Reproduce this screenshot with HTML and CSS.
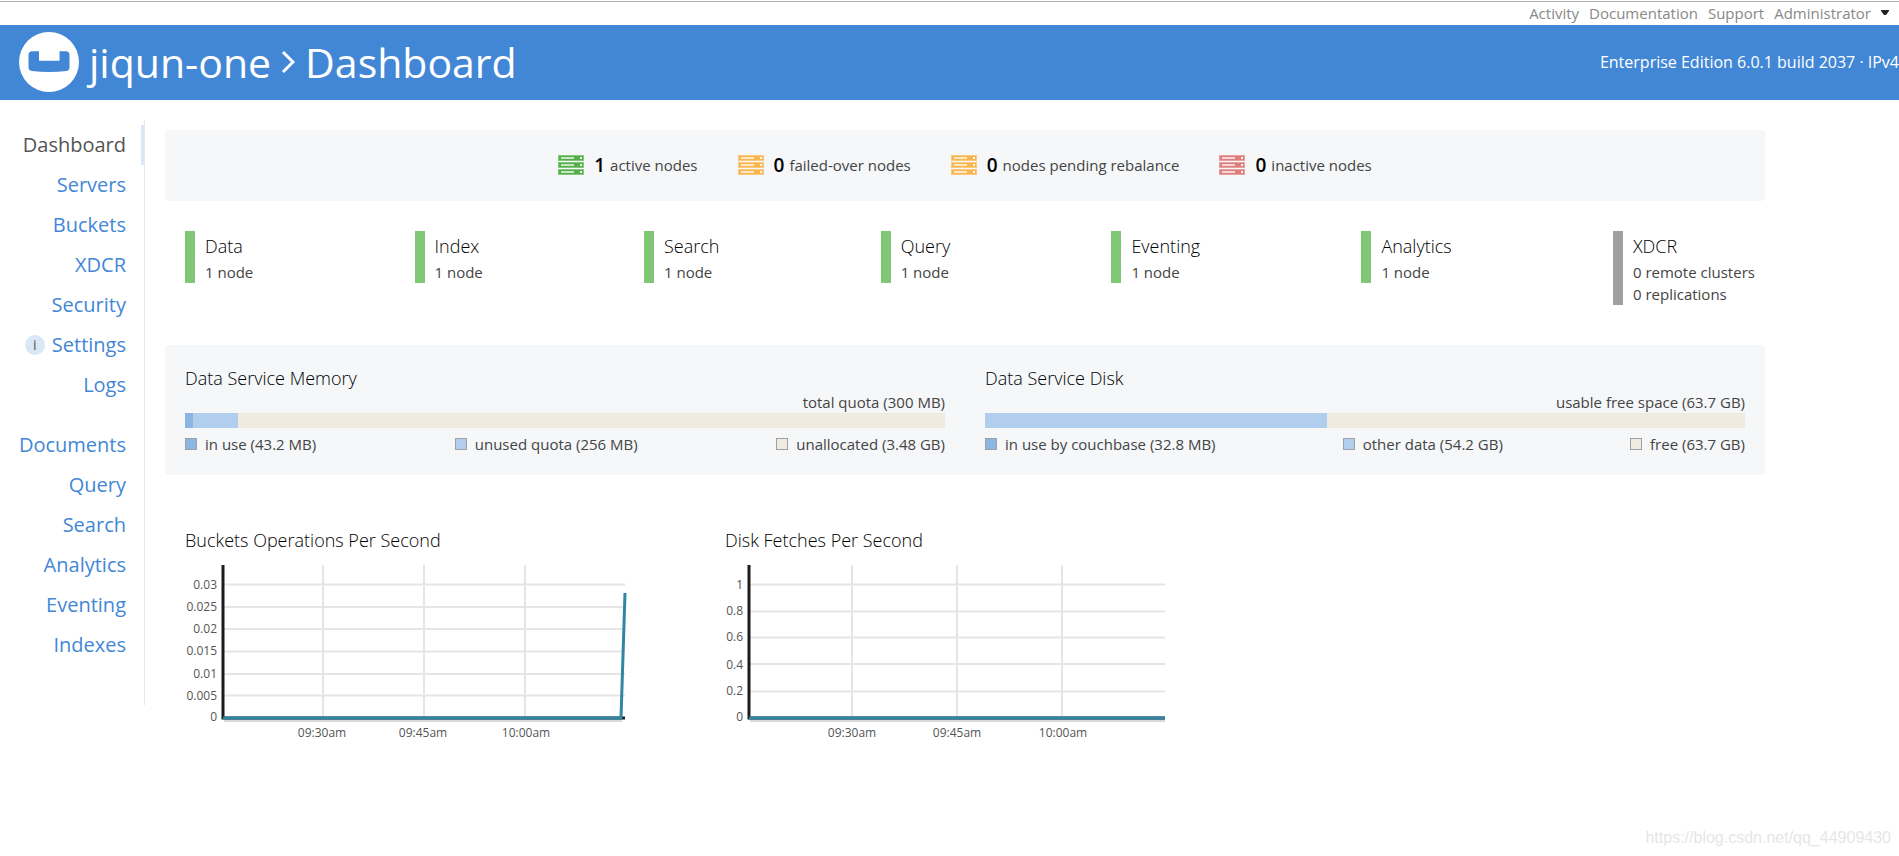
FILE: index.html
```html
<!DOCTYPE html>
<html lang="en">
<head>
<meta charset="utf-8">
<title>jiqun-one - Dashboard</title>
<link rel="stylesheet" href="styles.css">
</head>
<body>
<svg class="sprite" aria-hidden="true">
  <symbol id="node" viewBox="0 0 26 20">
    <path fill="currentColor" opacity="0.7" d="M0 0h26v6H0zM0 7h26v6H0zM0 14h26v6H0z"/>
    <path fill="currentColor" d="M1 1h24v4H1zM1 8h24v4H1zM1 15h24v4H1z"/>
    <path fill="#fff" fill-opacity="0.9" d="M3 2.300h13v1.500H3zM3 9.300h13v1.500H3zM3 16.300h13v1.500H3zM22 2h2v2h-2zM22 9h2v2h-2zM22 16h2v2h-2z"/>
  </symbol>
</svg>
<nav class="topbar" aria-label="Account">
  <a href="#">Activity</a>
  <a href="#">Documentation</a>
  <a href="#">Support</a>
  <button type="button" class="user">Administrator <svg class="caret" viewBox="0 0 8 5"><path d="M0 0h8v1L5 5H3L0 1z"/></svg></button>
</nav>
<header class="header">
  <svg class="logo" viewBox="0 0 60 60" role="img" aria-label="Couchbase">
    <circle cx="30" cy="30" r="30" fill="#fff"/>
    <path fill="#4287d6" d="M12.500 19.300H20V28.800H40.500V19.300H47.500Q50.500 19.800 50.500 23V35.500Q50.500 38.500 47.500 39Q30 41 13 39Q9.500 38.500 9.500 35.500V23Q9.500 19.800 12.500 19.300Z"/>
  </svg>
  <h1 class="title">jiqun-one <svg class="chevron" viewBox="0 0 14 24"><path d="M2 2l10 10L2 22"/></svg> Dashboard</h1>
  <p class="edition">Enterprise Edition 6.0.1 build 2037 · IPv4</p>
</header>
<div class="layout">
  <nav class="sidebar" aria-label="Main">
    <a class="current" href="#">Dashboard</a>
    <a href="#">Servers</a>
    <a href="#">Buckets</a>
    <a href="#">XDCR</a>
    <a href="#">Security</a>
    <a href="#"><span class="info">i</span>Settings</a>
    <a href="#">Logs</a>
    <a class="group-start" href="#">Documents</a>
    <a href="#">Query</a>
    <a href="#">Search</a>
    <a href="#">Analytics</a>
    <a href="#">Eventing</a>
    <a href="#">Indexes</a>
  </nav>
  <main class="content">
    <section class="panel nodes">
      <div class="status green"><svg><use href="#node"/></svg><strong>1</strong><span>active nodes</span></div>
      <div class="status orange"><svg><use href="#node"/></svg><strong>0</strong><span>failed-over nodes</span></div>
      <div class="status orange"><svg><use href="#node"/></svg><strong>0</strong><span>nodes pending rebalance</span></div>
      <div class="status red"><svg><use href="#node"/></svg><strong>0</strong><span>inactive nodes</span></div>
    </section>
    <section class="services">
      <div class="service"><h2>Data</h2><p>1 node</p></div>
      <div class="service"><h2>Index</h2><p>1 node</p></div>
      <div class="service"><h2>Search</h2><p>1 node</p></div>
      <div class="service"><h2>Query</h2><p>1 node</p></div>
      <div class="service"><h2>Eventing</h2><p>1 node</p></div>
      <div class="service"><h2>Analytics</h2><p>1 node</p></div>
      <div class="service idle"><h2>XDCR</h2><p>0 remote clusters</p><p>0 replications</p></div>
    </section>
    <section class="panel usage">
      <div>
        <h2>Data Service Memory</h2>
        <p class="total">total quota (300 MB)</p>
        <div class="bar"><span class="used" style="width:1%"></span><span class="other" style="width:6%"></span></div>
        <ul class="legend">
          <li><i class="used"></i>in use (43.2 MB)</li>
          <li><i class="other"></i>unused quota (256 MB)</li>
          <li><i class="free"></i>unallocated (3.48 GB)</li>
        </ul>
      </div>
      <div>
        <h2>Data Service Disk</h2>
        <p class="total">usable free space (63.7 GB)</p>
        <div class="bar"><span class="other" style="width:45%"></span></div>
        <ul class="legend">
          <li><i class="used"></i>in use by couchbase (32.8 MB)</li>
          <li><i class="other"></i>other data (54.2 GB)</li>
          <li><i class="free"></i>free (63.7 GB)</li>
        </ul>
      </div>
    </section>
    <section class="charts">
      <div>
        <h2>Buckets Operations Per Second</h2>
        <svg class="chart" viewBox="0 0 450 180">
          <g class="grid">
            <path d="M39 19.500H440M39 42H440M39 64H440M39 86.500H440M39 109H440M39 130.500H440M138 0V152M239 0V152M340 0V152"/>
          </g>
          <g class="ticks-y">
            <text x="32" y="24">0.03</text><text x="32" y="46">0.025</text><text x="32" y="68">0.02</text><text x="32" y="90">0.015</text><text x="32" y="113">0.01</text><text x="32" y="135">0.005</text><text x="32" y="156">0</text>
          </g>
          <g class="ticks-x">
            <text x="137" y="172">09:30am</text><text x="238" y="172">09:45am</text><text x="341" y="172">10:00am</text>
          </g>
          <path class="axis" d="M38 0V153H440"/>
          <path class="shadow" d="M39 155H437"/>
          <path class="line" d="M38 153H436L440 28"/>
        </svg>
      </div>
      <div>
        <h2>Disk Fetches Per Second</h2>
        <svg class="chart" viewBox="0 0 450 180">
          <g class="grid">
            <path d="M25 19.500H440M25 46.500H440M25 72.500H440M25 99H440M25 126.500H440M127 0V152M232 0V152M337 0V152"/>
          </g>
          <g class="ticks-y">
            <text x="18" y="24">1</text><text x="18" y="50">0.8</text><text x="18" y="76">0.6</text><text x="18" y="104">0.4</text><text x="18" y="130">0.2</text><text x="18" y="156">0</text>
          </g>
          <g class="ticks-x">
            <text x="127" y="172">09:30am</text><text x="232" y="172">09:45am</text><text x="338" y="172">10:00am</text>
          </g>
          <path class="axis" d="M24 0V153H440"/>
          <path class="shadow" d="M25 155H440"/>
          <path class="line" d="M24 153H440"/>
        </svg>
      </div>
    </section>
  </main>
</div>
<footer class="watermark">https://blog.csdn.net/qq_44909430</footer>
</body>
</html>
```

FILE: styles.css
```css
* { box-sizing: border-box; }

body {
  margin: 0;
  min-height: 100vh;
  display: flex;
  flex-direction: column;
  background: #fff;
  color: #444;
  font: 15px/22px "Open Sans", "Noto Sans", sans-serif;
}

h1, h2, p, ul { margin: 0; padding: 0; font-weight: 400; }
a { color: #4287d6; text-decoration: none; }
.sprite { display: none; }

h2 {
  color: #000;
  font-size: 18px;
  font-weight: 350;
  line-height: 26px;
}

.topbar {
  display: flex;
  justify-content: flex-end;
  align-items: center;
  gap: 10px;
  height: 25px;
  padding-right: 10px;
  box-shadow: inset 0 1px #fff, inset 0 2px #b0b0b0;
}

.topbar a, .user { color: #888; font-size: 15px; line-height: 22px; }

.user {
  display: flex;
  align-items: center;
  gap: 10px;
  padding: 0;
  border: 0;
  background: none;
  font-family: inherit;
}

.caret { width: 8px; height: 5px; fill: #222; }

.header {
  display: flex;
  align-items: center;
  gap: 10px;
  height: 75px;
  padding: 0 0 1px 19px;
  background: #4287d6;
  color: #fff;
}

.logo { width: 60px; height: 60px; }

.title {
  display: flex;
  align-items: center;
  gap: 10px;
  font-size: 41px;
  line-height: 56px;
}

.chevron {
  width: 14px;
  height: 24px;
  fill: none;
  stroke: #fff;
  stroke-width: 3;
}

.edition {
  margin-left: auto;
  font-size: 16px;
  font-weight: 500;
  white-space: nowrap;
}

.layout {
  display: flex;
  align-items: flex-start;
  gap: 20px;
  padding-top: 20px;
}

.sidebar {
  flex: none;
  display: flex;
  flex-direction: column;
  width: 145px;
  padding: 5px 0 40px;
  border-right: 1px solid #e6e6e6;
}

.sidebar a {
  display: flex;
  align-items: center;
  justify-content: flex-end;
  gap: 7px;
  height: 40px;
  padding-right: 15px;
  border-right: 3px solid transparent;
  font-size: 20px;
}

.sidebar .current { border-color: #d9e7f7; color: #555; }
.sidebar .group-start { margin-top: 20px; }

.info {
  width: 20px;
  height: 20px;
  border-radius: 50%;
  background: #d9e7f7;
  color: #555;
  font-size: 14px;
  line-height: 20px;
  text-align: center;
}

.content {
  flex: 1;
  max-width: 1600px;
  padding-top: 10px;
}

.panel { border-radius: 4px; background: #f5f7f9; }

.nodes {
  display: flex;
  justify-content: center;
  align-items: center;
  gap: 40px;
  height: 71px;
  padding-bottom: 2px;
}

.status { display: flex; align-items: center; }
.status svg { width: 26px; height: 20px; margin-right: 10px; }
.status strong { margin-right: 5px; color: #000; font-size: 19px; font-weight: 600; }
.status span { font-size: 15px; }
.green svg { color: #56b04a; }
.orange svg { color: #f8b64c; }
.red svg { color: #df7c7c; }

.services {
  display: flex;
  justify-content: space-between;
  align-items: flex-start;
  padding: 30px 10px 40px 20px;
}

.service { padding-left: 10px; border-left: 10px solid #80c677; }
.service h2 { line-height: 30px; }
.idle { border-color: #a0a0a0; }

.usage {
  display: grid;
  grid-template-columns: 1fr 1fr;
  gap: 40px;
  padding: 20px;
}

.total { text-align: right; }

.bar { display: flex; height: 15px; background: #efebe0; }
.used { background: #8db5e4; }
.other { background: #b1ceef; }
.free { background: #efebe0; }

.legend {
  display: flex;
  justify-content: space-between;
  margin: 5px 0 0;
  list-style: none;
}

.legend li { display: flex; align-items: center; gap: 8px; }
.legend i { width: 12px; height: 12px; border: 1px solid #a0a0a0; }

.charts {
  display: grid;
  grid-template-columns: repeat(3, 1fr);
  gap: 40px;
  padding: 52px 0 0 20px;
}

.chart {
  display: block;
  width: 450px;
  max-width: 100%;
  margin-top: 12px;
  font-size: 12px;
}

.grid { fill: none; stroke: #000; stroke-opacity: 0.1; stroke-width: 2; }
.chart text { fill: #555; }
.ticks-y { text-anchor: end; }
.ticks-x { text-anchor: middle; }
.axis { fill: none; stroke: #1c1c1c; stroke-width: 3; }
.shadow { fill: none; stroke: #000; stroke-opacity: 0.15; stroke-width: 4; }
.line { fill: none; stroke: #2f86a5; stroke-width: 3; }

.watermark {
  margin-top: auto;
  padding: 0 8px 6px 0;
  color: #e6e6e6;
  font: 16px/24px "Liberation Sans", sans-serif;
  text-align: right;
}
```
